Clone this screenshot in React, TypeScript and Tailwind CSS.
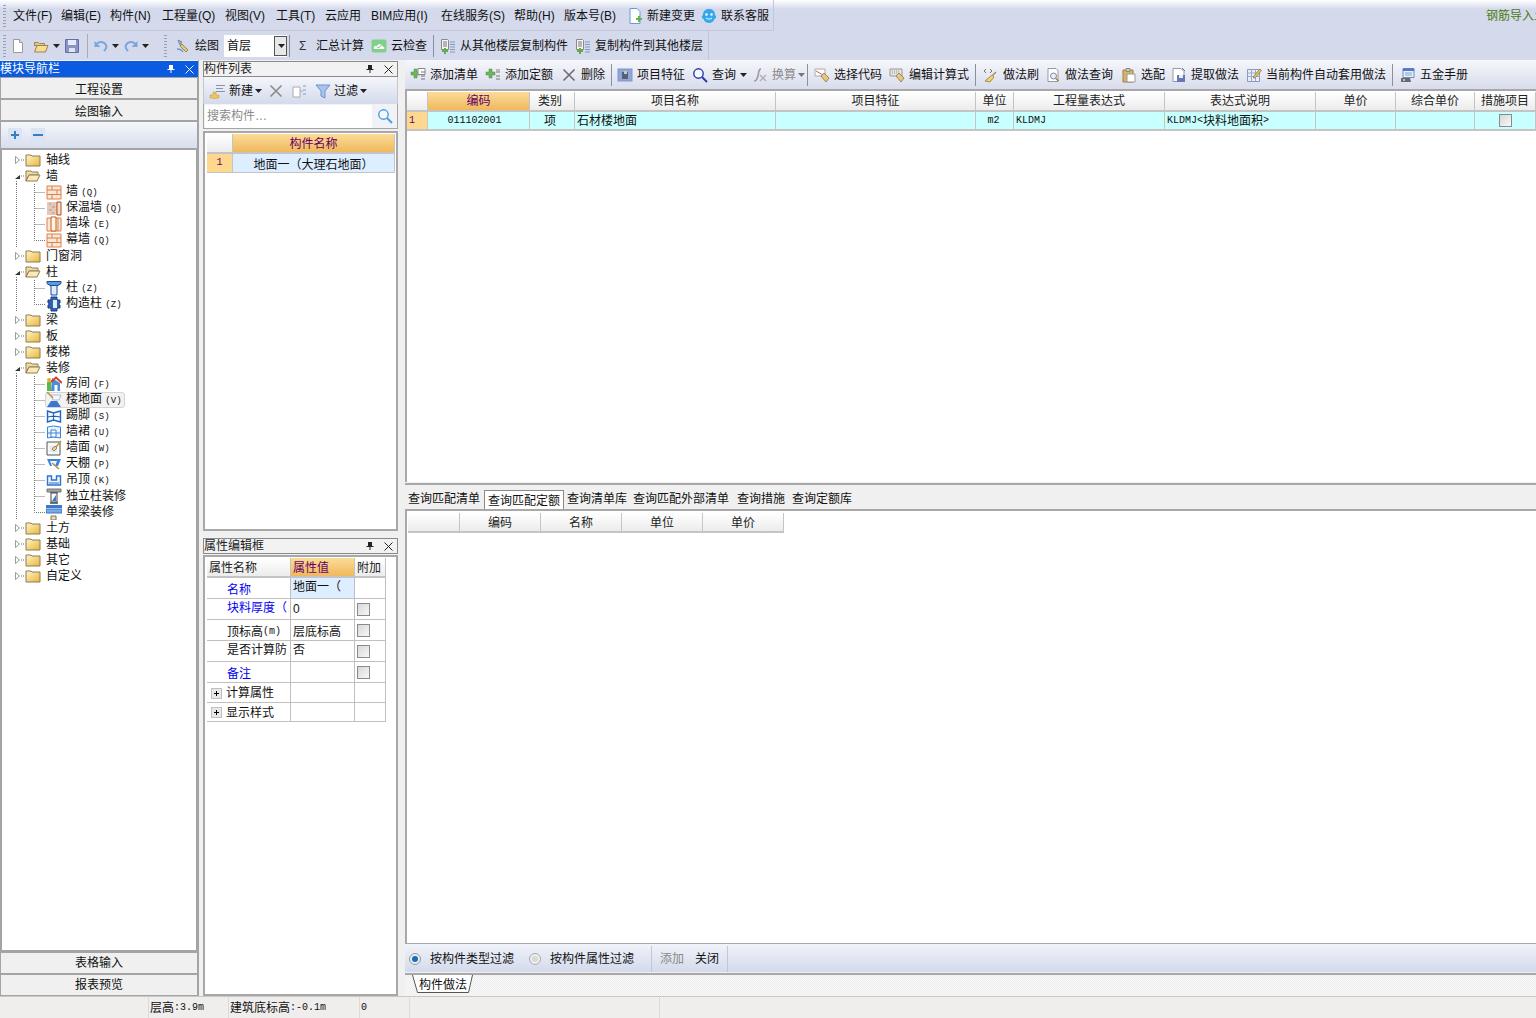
import type { ReactNode } from 'react';

// half width latin, like the bitmap font of the app
const M = ({ children }: { children: ReactNode }) => (
  <span className="font-['Liberation_Mono',monospace] text-[10px]">{children}</span>
);
const T = ({ children }: { children: ReactNode }) => (
  <span className="font-['Liberation_Mono',monospace] text-[9px]">{children}</span>
);

const Ico = ({ children, className = '' }: { children: ReactNode; className?: string }) => (
  <svg viewBox="0 0 16 16" className={`h-4 w-4 shrink-0 ${className}`}>{children}</svg>
);

const NewPage = () => <Ico><path d="M3.5 1.5h6l3 3v10h-9z" fill="#fff" stroke="#9a9a9a" /><path d="M9.5 1.5v3h3" fill="#e8e8e8" stroke="#9a9a9a" /></Ico>;
const OpenFolder = () => <Ico><path d="M1.5 4.5h4l1 1h5v2h-10z" fill="#e8c97a" stroke="#9a8450" /><path d="M1.5 14l2.5-6.5h11l-2.5 6.5z" fill="#f6dc94" stroke="#9a8450" /></Ico>;
const Save = () => <Ico><path d="M1.5 1.5h13v13h-13z" fill="#8a94c8" stroke="#6670a8" /><path d="M4 2h8v5H4z" fill="#e8ecf8" /><path d="M5 10h6v4H5z" fill="#dfe3f2" /></Ico>;
const Undo = ({ flip = false }: { flip?: boolean }) => (
  <Ico className={flip ? '-scale-x-100' : ''}>
    <path d="M3 7c2-4 8-4 10 0 1 2 0 4-2 6" fill="none" stroke="#7aa6dc" strokeWidth="2" />
    <path d="M1.5 3v6h6z" fill="#7aa6dc" />
  </Ico>
);
const Caret = ({ dim = false }: { dim?: boolean }) => (
  <svg viewBox="0 0 7 4" className="ml-[2px] h-1 w-[7px] shrink-0"><path d="M0 0h7L3.5 4z" fill={dim ? '#777' : '#222'} /></svg>
);
const Brush = () => <Ico><path d="M3 2l4 2-2 3z" fill="#a8b4d8" stroke="#7a86a8" /><path d="M7 6l6 6-2 2-6-6z" fill="#e2c478" stroke="#a08a50" /><path d="M2 11c3 0 5 1 6 3" fill="none" stroke="#6f9ad8" strokeWidth="1.5" /></Ico>;
const CloudOk = () => <Ico><rect x="0.5" y="1.5" width="15" height="13" rx="2" fill="#7fd08a" /><path d="M3 11c-1-3 2-4 3-3 1-3 6-2 6 1 2 0 2 2 0 2z" fill="#fff" /><path d="M6 8.5l1.5 1.5L10.5 7" fill="none" stroke="#66bb72" /></Ico>;
const CopyList = () => <Ico><path d="M1.5 1.5h6l1 1v9h-7z" fill="#f4f4f4" stroke="#888" /><path d="M3 4h4M3 6h4M3 8h4" stroke="#777" /><path d="M10 4h5M10 6.5h5M10 9h5M10 11.5h5M10 14h5" stroke="#7b9ac0" /><path d="M2 12h2v-2h2v2h2v2H6v2H4v-2H2z" fill="#5fae4c" /></Ico>;
const AddList = ({ grid = true }: { grid?: boolean }) => (
  <Ico>
    <path d="M1 5h3V2h3v3h3v3H7v3H4V8H1z" fill="#6fb35c" stroke="#4f8f44" strokeWidth="0.5" />
    {grid ? <path d="M8 1.5h7v6H8z" fill="#fff" stroke="#888" /> : <path d="M11 3h4" stroke="#888" />}
    <path d="M11 5h4M11 9h4M11 12h4" stroke="#777" />
  </Ico>
);
const Cross = ({ dim = false }: { dim?: boolean }) => <Ico><path d="M2.5 2.5l11 11M13.5 2.5l-11 11" stroke={dim ? '#8b8b8b' : '#6c6c6c'} strokeWidth="1.6" /></Ico>;
const Feature = () => <Ico><rect x="1" y="2" width="14" height="12" fill="#8fa6d6" stroke="#7e96c8" /><path d="M5 5h6v7H5z" fill="#56606e" /><path d="M7 4h3v3H7z" fill="#c4ccd8" /></Ico>;
const Search = ({ c = '#2a3aa8' }: { c?: string }) => <Ico><circle cx="6.5" cy="6.5" r="4.7" fill="#f4f8ff" stroke={c} strokeWidth="1.4" /><path d="M10 10l5 5" stroke={c} strokeWidth="2" /></Ico>;
const Fx = () => <Ico><path d="M9 2c-3 0-2 4-3 7s-1 5-4 5" fill="none" stroke="#9a9a9a" strokeWidth="1.6" /><path d="M8 8l6 6M14 8l-6 6" stroke="#b0b0b0" strokeWidth="1.4" /></Ico>;
const Tag = () => <Ico><path d="M1 2h10v7H1z" fill="#fff" stroke="#aaa" /><path d="M2 4l7 4" stroke="#d06060" /><path d="M7 9l3-3 5 5-3 4z" fill="#e6c682" stroke="#a08850" /></Ico>;
const Keys = () => <Ico><path d="M1 2h12v7H1z" fill="#e4e4e4" stroke="#999" /><path d="M3 4h8M3 6h8" stroke="#999" strokeDasharray="1 1" /><path d="M7 9l3-3 5 5-3 4z" fill="#e6c682" stroke="#a08850" /></Ico>;
const Broom = () => <Ico><path d="M1 4l2-2M1 4l2 2M7 2l2 2-2 2" fill="none" stroke="#777" /><path d="M13 5l-5 5" stroke="#9c8a50" strokeWidth="1.5" /><path d="M9 8l2 2-4 5-5-1z" fill="#ecd27a" stroke="#a8904c" /></Ico>;
const Doc = () => <Ico><path d="M3 1.5h8l2 2v11H3z" fill="#fff" stroke="#999" /><circle cx="8.5" cy="9" r="3" fill="#e8eef8" stroke="#7a8aa8" /><path d="M10.5 11l3 3" stroke="#a88a48" strokeWidth="1.6" /></Ico>;
const Clip = () => <Ico><path d="M2 3h10v12H2z" fill="#d8b468" stroke="#9c8040" /><path d="M5 1.5h4v3H5z" fill="#ccc" stroke="#888" /><path d="M6 7h8v8H6z" fill="#fff" stroke="#999" /></Ico>;
const Extract = () => <Ico><path d="M2 1.5h8l3 3v10H2z" fill="#fff" stroke="#999" /><path d="M6 8h8v7H6z" fill="#6a74b8" /><path d="M8 8h4v3H8z" fill="#e8ecf8" /><path d="M11 1l3 3" stroke="#4a74c0" /></Ico>;
const AutoApply = () => <Ico><path d="M1.5 2.5h12v12h-12z" fill="#e8eef6" stroke="#8a9ab8" /><path d="M1.5 6h12M1.5 9.5h12M5.5 2.5v12M9.5 2.5v12" stroke="#9aaaca" /><path d="M14 2l1.5 1.5-6 7-2 .5.5-2z" fill="#e4c274" stroke="#a08850" /></Ico>;
const Manual = () => <Ico><path d="M3 1.5h11v9H3z" fill="#e8f0fa" stroke="#6a8ac0" /><path d="M3 1.5h11v2.5H3z" fill="#4a7cc8" /><path d="M5 6h7M5 8h7" stroke="#8aa0c4" /><path d="M1 11h9l1 4H1z" fill="#6a6a6a" /><circle cx="4" cy="13" r="1" fill="#ddd" /></Ico>;
const ChangeDoc = () => <Ico><path d="M3 .5h7l3 3v12H3z" fill="#fff" stroke="#6a9ad0" /><path d="M9 10h2V8h2v2h2v2h-2v2h-2v-2H9z" fill="#6ab04c" /></Ico>;
const Service = () => <Ico><path d="M8 1c4 0 6 2.5 6 6 2 1 1 4-.5 4-1 2.5-3 4-5.500 4s-4.500-1.500-5.500-4C1 11 0 8 2 7c0-3.500 2-6 6-6z" fill="#35a8ea" /><circle cx="5.5" cy="6.5" r="1.2" fill="#fff" /><circle cx="10.5" cy="6.5" r="1.2" fill="#fff" /><path d="M5 10c2 1.5 4 1.5 6 0" fill="none" stroke="#fff" /></Ico>;
const NewItem = () => <Ico><path d="M7 2.5h9M7 5.5h7M7 8.5h9" stroke="#8a94a8" /><path d="M1 12h3V9h3v3h3v3H7v1H4v-1H1z" fill="#ecc85c" stroke="#b89838" strokeWidth="0.5" /></Ico>;
const CopyDoc = () => <Ico><path d="M2 4h7v10H2z" fill="#fff" stroke="#aaa" /><path d="M12 3h3M12 7h3M12 11h3" stroke="#7e9cc4" /><path d="M9 8h3" stroke="#aaa" /></Ico>;
const Funnel = () => <Ico><path d="M1 2h14L10 8v7l-4-2V8z" fill="#a8c4ec" stroke="#6c92cc" /></Ico>;

const Pin = () => (
  <svg viewBox="0 0 8 10" className="h-[10px] w-2 shrink-0"><path d="M2 1h4v4h1.5v1h-3v3h-1V6H.5V5H2z" fill="currentColor" /></svg>
);
const Close = () => (
  <svg viewBox="0 0 9 9" className="h-[9px] w-[9px] shrink-0"><path d="M.5.5l8 8M8.5.5l-8 8" stroke="currentColor" /></svg>
);

const Sep = ({ className = 'mr-[5px]' }: { className?: string }) => <div className={`h-[22px] w-px shrink-0 bg-[#8a8f9c] ${className}`} />;

const Grip = ({ className = '' }: { className?: string }) => (
  <div className={`h-[22px] w-[3px] shrink-0 bg-[repeating-linear-gradient(#9aa0b4_0_1px,transparent_1px_3px)] ${className}`} />
);

const Tool = ({ icon, label, className = '', dim = false }: { icon?: ReactNode; label: string; className?: string; dim?: boolean }) => (
  <div className={`flex shrink-0 items-center gap-[4px] ${dim ? 'text-[#8a8a8a]' : ''} ${className}`}>
    {icon}
    <span>{label}</span>
  </div>
);

const PanelTitle = ({ title, active = false }: { title: string; active?: boolean }) => (
  <div className={`flex h-4 items-center pr-[4px] ${active ? 'bg-[#0a5be0] text-white' : 'border border-[#8a8a8a] bg-[#f2f2f2] text-[#222]'}`}>
    <span className="flex-1 truncate">{title}</span>
    <span className="mr-[10px]"><Pin /></span>
    <Close />
  </div>
);

const NavButton = ({ label, className = '' }: { label: string; className?: string }) => (
  <div className={`flex h-[22px] items-center justify-center border border-[#a4a4a4] bg-[#f0f0f0] text-[#111] ${className}`}>{label}</div>
);

type IconKind = 'brick' | 'warm' | 'pier' | 'column' | 'gcol' | 'room' | 'floor' | 'skirt' | 'dado' | 'wallf' | 'ceil' | 'hang' | 'scol' | 'beam';

const TreeIcon = ({ kind }: { kind: IconKind }) => {
  switch (kind) {
    case 'brick':
      return <Ico><path d="M1 2h14v13H1z" fill="#fbe6d4" stroke="#d8834c" /><path d="M1 6h14M1 10.5h14M6 2v4M11 6v4.500M6 10.500V15" stroke="#d8834c" /></Ico>;
    case 'warm':
      return <Ico><path d="M1 2h10v13H1z" fill="#e4c8bc" /><path d="M11 2h4v13h-4z" fill="#f4e0cc" stroke="#b84c20" /><path d="M3 4h2M6 7h3M3 10h3M6 13h2" stroke="#c88c78" /></Ico>;
    case 'pier':
      return <Ico><path d="M1 2h14v13H1z" fill="#fbe6d4" stroke="#d8834c" /><path d="M5 1h5v14H5z" fill="#fff4e8" stroke="#c85c1c" /><path d="M12 2v13" stroke="#d8834c" /></Ico>;
    case 'column':
      return <Ico><path d="M1 1.5h14v2l-3 2H4l-3-2z" fill="#5a9ae0" stroke="#1c4c98" /><path d="M5 5.5h6V15H5z" fill="#dcecfc" stroke="#1c4c98" /></Ico>;
    case 'gcol':
      return <Ico><path d="M5 1h6v3h3v3h-1v2h1v3h-3v3H5v-3H2V9h1V7H2V4h3z" fill="#2c62b4" stroke="#1c3c80" /><path d="M7 4h4v8H7z" fill="#e4ecf8" /></Ico>;
    case 'room':
      return <Ico><path d="M6 2l8 5v8H5z" fill="#4c8cd8" /><path d="M5 6l5-4.5L16 7" fill="none" stroke="#d83a2c" strokeWidth="2" /><path d="M8.5 9h3v6h-3z" fill="#fff" /><path d="M1 6h4v9H1z" fill="#5cb848" /><circle cx="3" cy="4" r="2" fill="#e8a82c" /></Ico>;
    case 'floor':
      return <Ico><path d="M5 3h10l-2 5H7z" fill="#f4f6fc" stroke="#b4bcd0" /><path d="M5 9h6l4 6H1z" fill="#3878d0" /><path d="M1 0l6 6" stroke="#b89848" strokeWidth="1.6" /></Ico>;
    case 'skirt':
      return <Ico><path d="M1.5 3l6 2 7-2v11l-7-2-6 2z" fill="#f4f8fe" stroke="#1c68c4" strokeWidth="1.4" /><path d="M7.5 5v7M1.5 9l6-1 7 1" stroke="#1c68c4" /></Ico>;
    case 'dado':
      return <Ico><path d="M1.5 3l6-1 7 1v11l-7-1-6 1z" fill="#e8f2fc" stroke="#3c84d4" /><path d="M5 6h5v7H5z" fill="#fff" stroke="#3c84d4" /><path d="M1.5 9h13" stroke="#3c84d4" /></Ico>;
    case 'wallf':
      return <Ico><path d="M1 2h13v13H1z" fill="#f8f8f8" stroke="#555" /><path d="M4 6h7v6H4z" fill="#dce8f8" /><path d="M15 1l-5 6" stroke="#b8984c" strokeWidth="1.4" /><path d="M9 6l2 2-3 3-2-2z" fill="#ecd27a" stroke="#a08850" /></Ico>;
    case 'ceil':
      return <Ico><path d="M1 3h14l-3 7H4z" fill="#3c84d8" /><path d="M4 5h7l-2 5H6z" fill="#f4f6fc" /><path d="M6 7l7 6" stroke="#a89048" strokeWidth="1.5" /></Ico>;
    case 'hang':
      return <Ico><path d="M1.5 4v9h13V4h-4v4h-5V4z" fill="#eaf2fc" stroke="#2c74cc" strokeWidth="1.4" /><path d="M3 11h10" stroke="#2c74cc" /></Ico>;
    case 'scol':
      return <Ico><path d="M1 1h14v3H1z" fill="#a4a4a4" stroke="#777" /><path d="M4 4h8v1H4zM4 14h8v2H4z" fill="#777" /><path d="M5 5h6v9H5z" fill="#fff" stroke="#444" /><path d="M6 13l4-6v6z" fill="#3878d0" /></Ico>;
    case 'beam':
      return <Ico><path d="M0 1h16v3H0z" fill="#3878d0" /><path d="M0 5h16v4H0z" fill="#7aa8e0" stroke="#3878d0" /><path d="M5 12h5v4H5z" fill="#e8dcc0" stroke="#8a7444" /></Ico>;
  }
};

const Folder = ({ open }: { open: boolean }) =>
  open ? (
    <Ico><path d="M1 13V3h5l1 1h6v3H4z" fill="#f0dca8" stroke="#8c7c50" /><path d="M1 13l3-6h11l-3 6z" fill="#fbeab8" stroke="#8c7c50" /></Ico>
  ) : (
    <Ico><path d="M1 4V3h5l1 1h8v10H1z" fill="url(#fold)" stroke="#8c7c50" /></Ico>
  );

type Node = { label: ReactNode; icon?: IconKind; folder?: 'open' | 'closed'; last?: boolean; selected?: boolean };

const tree: Node[] = [
  { label: '轴线', folder: 'closed' },
  { label: '墙', folder: 'open' },
  { label: <>墙 <T>(Q)</T></>, icon: 'brick' },
  { label: <>保温墙 <T>(Q)</T></>, icon: 'warm' },
  { label: <>墙垛 <T>(E)</T></>, icon: 'pier' },
  { label: <>幕墙 <T>(Q)</T></>, icon: 'brick', last: true },
  { label: '门窗洞', folder: 'closed' },
  { label: '柱', folder: 'open' },
  { label: <>柱 <T>(Z)</T></>, icon: 'column' },
  { label: <>构造柱 <T>(Z)</T></>, icon: 'gcol', last: true },
  { label: '梁', folder: 'closed' },
  { label: '板', folder: 'closed' },
  { label: '楼梯', folder: 'closed' },
  { label: '装修', folder: 'open' },
  { label: <>房间 <T>(F)</T></>, icon: 'room' },
  { label: <>楼地面 <T>(V)</T></>, icon: 'floor', selected: true },
  { label: <>踢脚 <T>(S)</T></>, icon: 'skirt' },
  { label: <>墙裙 <T>(U)</T></>, icon: 'dado' },
  { label: <>墙面 <T>(W)</T></>, icon: 'wallf' },
  { label: <>天棚 <T>(P)</T></>, icon: 'ceil' },
  { label: <>吊顶 <T>(K)</T></>, icon: 'hang' },
  { label: '独立柱装修', icon: 'scol' },
  { label: '单梁装修', icon: 'beam', last: true },
  { label: '土方', folder: 'closed' },
  { label: '基础', folder: 'closed' },
  { label: '其它', folder: 'closed' },
  { label: '自定义', folder: 'closed' },
];

const TreeRow = ({ node }: { node: Node }) => {
  const dots = { stroke: '#777', strokeDasharray: '1 1', fill: 'none' };
  if (node.folder) {
    return (
      <div className="flex h-4 items-center pl-[11px]">
        <svg viewBox="0 0 11 16" className="h-4 w-[11px] shrink-0">
          {node.folder === 'open' ? <path d="M1 11l5-4v4z" fill="#333" /> : <path d="M1.5 4.5l4 3.5-4 3.500z" fill="#fff" stroke="#999" />}
          <path d="M7 8h4" {...dots} />
          {node.folder === 'open' && <path d="M2.5 13v3" {...dots} />}
        </svg>
        <Folder open={node.folder === 'open'} />
        <span className="ml-[5px]">{node.label}</span>
      </div>
    );
  }
  return (
    <div className="flex h-4 items-center pl-[13px]">
      <svg viewBox="0 0 29 16" className="h-4 w-[29px] shrink-0">
        <path d="M.5 0v16" {...dots} />
        <path d={node.last ? 'M18.5 0v8.5H29' : 'M18.5 0v16M18.5 8.5H29'} {...dots} />
      </svg>
      <div className={`flex h-4 items-center rounded-[3px] ${node.selected ? 'w-[80px] border border-[#d4d4d4] bg-[#f2f2f2]' : ''}`}>
        <span className={node.selected ? '' : 'ml-px'}><TreeIcon kind={node.icon!} /></span>
        <span className="ml-[4px] whitespace-nowrap">{node.label}</span>
      </div>
    </div>
  );
};

const Head = ({ label, hot = false, className = '' }: { label: string; hot?: boolean; className?: string }) => (
  <div className={`flex h-5 items-center justify-center border-r border-b-2 border-[#c4c4c4] ${hot ? 'bg-gradient-to-b from-[#fbdc98] to-[#efb85c] text-[#660066]' : 'bg-gradient-to-b from-white to-[#ececec] text-[#222]'} ${className}`}>
    {label}
  </div>
);

const Check = () => <div className="h-[13px] w-[13px] border border-[#8a8a8a] bg-gradient-to-br from-[#d8d8d8] to-[#f8f8f8]" />;

const Expand = () => (
  <div className="relative mr-[4px] h-[11px] w-[11px] shrink-0 border border-[#c0c0c0] bg-[#e8e8e8]">
    <div className="absolute left-[2px] top-[4px] h-px w-[5px] bg-black" />
    <div className="absolute left-[4px] top-[2px] h-[5px] w-px bg-black" />
  </div>
);

const propCell = 'flex items-center border-r border-b border-[#c0c0c0] overflow-hidden whitespace-nowrap';

const PropRow = ({ name, value, blue, check = true, h = 'h-[21px]', valueBg = '', expand = false, nudge = '', valueNudge = '' }: { name: ReactNode; value?: string; blue?: boolean; check?: boolean; h?: string; valueBg?: string; expand?: boolean; nudge?: string; valueNudge?: string }) => (
  <div className={`grid grid-cols-[84px_64px_31px] ${h}`}>
    <div className={`${propCell} ${expand ? 'pl-[4px]' : 'pl-[20px]'} ${blue ? 'text-[#0000ee]' : ''} ${nudge}`}>
      {expand && <Expand />}
      {name}
    </div>
    <div className={`${propCell} pl-[2px] ${valueBg} ${valueNudge}`}>{value}</div>
    <div className={`${propCell} pl-[2px]`}>{check && <Check />}</div>
  </div>
);

const mainCols = ['编码', '类别', '项目名称', '项目特征', '单位', '工程量表达式', '表达式说明', '单价', '综合单价', '措施项目'];

const rowCell = 'flex h-[19px] items-center border-r border-b-2 border-[#c4c4c4] bg-[#c8ffff] overflow-hidden whitespace-nowrap';

export default function App() {
  return (
    <div className="flex h-[1018px] w-[1536px] flex-col overflow-hidden bg-[#f0f0f0] text-[12px] leading-4 text-[#111] font-['Liberation_Sans','Noto_Sans_CJK_SC',sans-serif]">
      <svg width="0" height="0" className="absolute">
        <defs>
          <linearGradient id="fold" x1="0" y1="0" x2="1" y2="1">
            <stop offset="0" stopColor="#fff6c8" />
            <stop offset="1" stopColor="#e8b43c" />
          </linearGradient>
        </defs>
      </svg>

      {/* barra de menu e ferramentas */}
      <div className="h-[60px] shrink-0 bg-[linear-gradient(#ffffff,#d4daec_9px)]">
        <div className="flex h-[31px] items-center">
          <div className="flex h-[31px] w-[774px] shrink-0 items-center border-r border-b border-[#c4c8d6] pl-[3px] pt-[1px]">
            <Grip className="mr-[7px]" />
            <span className="w-[48px]">文件(F)</span>
            <span className="w-[49px]">编辑(E)</span>
            <span className="w-[52px]">构件(N)</span>
            <span className="w-[63px]">工程量(Q)</span>
            <span className="w-[51px]">视图(V)</span>
            <span className="w-[49px]">工具(T)</span>
            <span className="w-[46px]">云应用</span>
            <span className="w-[70px]">BIM应用(I)</span>
            <span className="w-[73px]">在线服务(S)</span>
            <span className="w-[50px]">帮助(H)</span>
            <span className="w-[63px]">版本号(B)</span>
            <Tool icon={<ChangeDoc />} label="新建变更" className="w-[74px] gap-[2px]" />
            <Tool icon={<Service />} label="联系客服" className="gap-[3px]" />
          </div>
          <span className="ml-[712px] whitespace-nowrap text-[#4c7a12]">钢筋导入土</span>
        </div>
        <div className="flex h-[29px] w-[709px] items-center border-r border-[#c4c8d6] pl-[3px]">
          <Grip className="mr-[4px]" />
          <NewPage />
          <span className="ml-[7px]"><OpenFolder /></span>
          <span className="ml-[2px]"><Caret /></span>
          <span className="ml-[4px]"><Save /></span>
          <div className="ml-[7px] mr-[5px] h-[24px] w-px bg-[#a8acb8]" />
          <Undo />
          <span className="ml-px"><Caret /></span>
          <span className="ml-[4px]"><Undo flip /></span>
          <span className="ml-px"><Caret /></span>
          <Grip className="ml-[15px] mr-[8px]" />
          <Tool icon={<Brush />} label="绘图" className="w-[49px]" />
          <div className="flex h-[22px] w-[63px] items-center justify-between bg-white pl-[3px]">
            <span>首层</span>
            <div className="flex h-[20px] w-[13px] items-center justify-center border border-[#555] bg-[#e8e8e8]"><Caret /></div>
          </div>
          <Sep className="ml-[2px] mr-[9px]" />
          <span className="w-[17px] text-[#333]">Σ</span>
          <span className="w-[55px]">汇总计算</span>
          <Tool icon={<CloudOk />} label="云检查" className="w-[62px]" />
          <Sep className="mr-[6px]" />
          <Tool icon={<CopyList />} label="从其他楼层复制构件" className="w-[135px]" />
          <Tool icon={<CopyList />} label="复制构件到其他楼层" />
        </div>
      </div>

      <div className="flex min-h-0 flex-1">
        {/* navegação */}
        <div className="flex w-[199px] shrink-0 flex-col border-r border-[#a4a4a4] pt-[1px]">
          <PanelTitle title="模块导航栏" active />
          <NavButton label="工程设置" className="pt-[3px]" />
          <NavButton label="绘图输入" className="pt-[3px]" />
          <div className="flex h-[27px] items-center gap-[9px] border-x border-t border-[#a4a4a4] bg-[linear-gradient(#f4f6fb,#d8deee)] pl-[7px]">
            <svg viewBox="0 0 14 14" className="h-[14px] w-[14px]"><rect width="14" height="14" fill="#dbe4f4" /><path d="M3 7h8M7 3v8" stroke="#3a7cc0" strokeWidth="2" /></svg>
            <svg viewBox="0 0 14 14" className="h-[14px] w-[14px]"><rect width="14" height="14" fill="#dbe4f4" /><path d="M2 7h10" stroke="#3a7cc0" strokeWidth="2" /></svg>
          </div>
          <div className="min-h-0 flex-1 border-2 border-[#a4a4a4] bg-white pt-[2px] pl-px">
            {tree.map((n, i) => <TreeRow key={i} node={n} />)}
          </div>
          <NavButton label="表格输入" />
          <NavButton label="报表预览" />
        </div>

        {/* lista de componentes + propriedades */}
        <div className="ml-[4px] flex w-[195px] shrink-0 flex-col pt-[1px]">
          <PanelTitle title="构件列表" />
          <div className="flex h-[27px] shrink-0 items-center border-x border-[#c8c8c8] bg-[linear-gradient(#f4f6fb,#d4daec)] pl-[5px]">
            <Tool icon={<NewItem />} label="新建" />
            <Caret />
            <span className="ml-[6px]"><Cross dim /></span>
            <span className="ml-[7px]"><CopyDoc /></span>
            <span className="ml-[8px]"><Funnel /></span>
            <span className="ml-[3px]">过滤</span>
            <Caret />
          </div>
          <div className="flex h-[25px] shrink-0 items-center border-x border-b border-[#a4a4a4] bg-[#f0f2f8]">
            <div className="ml-px flex h-[23px] w-[167px] items-center rounded-[2px] bg-white pl-[2px] text-[#8a8a8a]">搜索构件…</div>
            <span className="ml-[5px]"><Search c="#4aa0e0" /></span>
          </div>
          <div className="mt-[2px] min-h-0 flex-1 border-2 border-[#a8a8a8] bg-white pl-[2px] pt-[1px]">
            <div className="grid grid-cols-[26px_162px]">
              <Head label="" />
              <Head label="构件名称" hot className="pt-[2px]" />
              <div className="flex h-[19px] items-center justify-center border-r border-b border-[#c4c4c4] bg-[#ffd890] font-['Liberation_Mono',monospace] text-[10px] text-[#660066]">1</div>
              <div className="flex h-[19px] items-center justify-center border-r border-b border-[#c4c4c4] bg-[#dceeff] pt-[3px]">地面一（大理石地面）</div>
            </div>
          </div>
          <div className="mt-[7px]"><PanelTitle title="属性编辑框" /></div>
          <div className="mt-[1px] h-[441px] shrink-0 border-2 border-[#a8a8a8] bg-white pl-[2px] pt-[1px]">
            <div className="grid grid-cols-[84px_64px_31px]">
              <Head label="属性名称" className="justify-start pl-[2px] pt-[2px]" />
              <Head label="属性值" hot className="justify-start pl-[2px] pt-[2px]" />
              <Head label="附加" className="justify-start pl-[2px] pt-[2px]" />
            </div>
            <PropRow name="名称" value="地面一（" blue check={false} valueBg="bg-[#dceeff]" nudge="pt-[3px]" valueNudge="pb-[2px]" />
            <PropRow name="块料厚度（" value="0" blue nudge="pb-[2px]" />
            <PropRow name={<>顶标高<M>(m)</M></>} value="层底标高" nudge="pt-[3px]" valueNudge="pt-[3px]" />
            <PropRow name="是否计算防" value="否" nudge="pb-[2px]" valueNudge="pb-[2px]" />
            <PropRow name="备注" blue nudge="pt-[3px]" />
            <PropRow name="计算属性" expand check={false} h="h-[20px]" nudge="pt-[1px]" />
            <PropRow name="显示样式" expand check={false} h="h-[19px]" nudge="pt-[1px]" />
          </div>
        </div>

        {/* área principal */}
        <div className="ml-[7px] flex min-w-0 flex-1 flex-col">
          <div className="flex h-[29px] shrink-0 items-center whitespace-nowrap bg-[linear-gradient(#f6f7fb,#d8dcec)] pl-[5px]">
            <Tool icon={<AddList />} label="添加清单" className="w-[75px]" />
            <Tool icon={<AddList grid={false} />} label="添加定额" className="w-[76px]" />
            <Tool icon={<Cross />} label="删除" className="w-[50px]" />
            <Sep />
            <Tool icon={<Feature />} label="项目特征" className="w-[75px]" />
            <Tool icon={<Search />} label="查询" className="w-[46px]" />
            <Caret />
            <Tool icon={<Fx />} label="换算" dim className="ml-[5px] w-[44px] gap-[2px]" />
            <Caret dim />
            <Sep className="ml-[2px] mr-[6px]" />
            <Tool icon={<Tag />} label="选择代码" className="w-[75px]" />
            <Tool icon={<Keys />} label="编辑计算式" className="w-[86px]" />
            <Sep className="mr-[7px]" />
            <Tool icon={<Broom />} label="做法刷" className="w-[62px] gap-[3px]" />
            <Tool icon={<Doc />} label="做法查询" className="w-[76px]" />
            <Tool icon={<Clip />} label="选配" className="w-[50px] gap-[3px]" />
            <Tool icon={<Extract />} label="提取做法" className="w-[75px]" />
            <Tool icon={<AutoApply />} label="当前构件自动套用做法" className="w-[146px]" />
            <Sep className="mr-[7px]" />
            <Tool icon={<Manual />} label="五金手册" className="gap-[3px]" />
          </div>

          <div className="h-[393px] shrink-0 border-t-2 border-l-2 border-[#a8a8a8] bg-white pt-[1px]">
            <div className="grid grid-cols-[21px_102px_45px_201px_200px_38px_151px_151px_80px_79px_61px]">
              <Head label="" />
              {mainCols.map((c, i) => <Head key={c} label={c} hot={i === 0} className={c === '类别' ? 'pr-[4px]' : ''} />)}
              <div className={`${rowCell} bg-[#ffd890] pl-[2px] font-['Liberation_Mono',monospace] text-[10px] text-[#660066]`}>1</div>
              <div className={`${rowCell} justify-center bg-[#b4ecff] pr-[8px]`}><M>011102001</M></div>
              <div className={`${rowCell} justify-center pr-[4px]`}>项</div>
              <div className={`${rowCell} pl-[2px]`}>石材楼地面</div>
              <div className={rowCell} />
              <div className={`${rowCell} justify-center pr-[2px]`}><M>m2</M></div>
              <div className={`${rowCell} pl-[2px]`}><M>KLDMJ</M></div>
              <div className={`${rowCell} pl-[2px]`}><M>KLDMJ&lt;</M>块料地面积<M>&gt;</M></div>
              <div className={rowCell} />
              <div className={rowCell} />
              <div className={`${rowCell} justify-center`}><Check /></div>
            </div>
          </div>

          <div className="h-[3px] shrink-0 border-b-2 border-[#a8a8a8] bg-[#f0f0f0]" />
          <div className="flex h-[24px] shrink-0 items-center whitespace-nowrap pl-[3px] pt-[3px]">
            <span>查询匹配清单</span>
            <span className="ml-[4px] mr-[3px] mt-[2px] flex h-[20px] items-center border-x border-t border-[#8a8a8a] bg-white px-[3px] pt-[2px]">查询匹配定额</span>
            <span>查询清单库</span>
            <span className="ml-[6px]">查询匹配外部清单</span>
            <span className="ml-[8px]">查询措施</span>
            <span className="ml-[7px]">查询定额库</span>
          </div>

          <div className="min-h-0 flex-1 border-t-2 border-l-2 border-[#a8a8a8] bg-white pl-px pt-[2px]">
            <div className="grid w-[376px] grid-cols-[52px_81px_81px_81px_81px]">
              <Head label="" />
              <Head label="编码" className="pt-[1px]" />
              <Head label="名称" className="pt-[1px]" />
              <Head label="单位" className="pt-[1px]" />
              <Head label="单价" className="pt-[1px]" />
            </div>
          </div>

          <div className="flex h-[29px] shrink-0 items-center border-t border-[#a8a8a8] bg-[linear-gradient(#f0f3fa,#d4daec)] pl-[4px] pt-[1px]">
            <svg viewBox="0 0 12 12" className="h-3 w-3 shrink-0"><circle cx="6" cy="6" r="5.5" fill="#e8ecf4" stroke="#999" /><circle cx="6" cy="6" r="3" fill="#1c6cb4" /></svg>
            <span className="ml-[9px]">按构件类型过滤</span>
            <svg viewBox="0 0 12 12" className="ml-[15px] h-3 w-3 shrink-0"><circle cx="6" cy="6" r="5.5" fill="#eeeeee" stroke="#aaa" /><circle cx="6" cy="6" r="3" fill="#d8d8d8" /></svg>
            <span className="ml-[9px]">按构件属性过滤</span>
            <div className="ml-[17px] h-[26px] w-px bg-[#c4c8d6]" />
            <span className="ml-[8px] text-[#8a8a8a]">添加</span>
            <span className="ml-[11px]">关闭</span>
            <div className="ml-[8px] h-[26px] w-px bg-[#c4c8d6]" />
          </div>

          <div className="mt-[1px] flex h-[23px] shrink-0 items-start border-t-2 border-[#a8a8a8] bg-[repeating-conic-gradient(#fafafa_0_25%,#ececec_0_50%)] bg-[length:2px_2px] pl-[7px]">
            <svg viewBox="0 0 7 18" className="h-[18px] w-[7px] shrink-0"><path d="M7 18V0H0l5 17.500z" fill="#fff" /><path d="M.5 0l5 17.500H7" fill="none" stroke="#555" /></svg>
            <span className="flex h-[18px] items-center border-b border-[#555] bg-white pt-[2px]">构件做法</span>
            <svg viewBox="0 0 6 18" className="h-[18px] w-[6px] shrink-0"><path d="M0 18V0h6L2 17.500z" fill="#fff" /><path d="M5.500 0L1.500 17.500H0" fill="none" stroke="#555" /></svg>
          </div>
        </div>
      </div>

      {/* status */}
      <div className="flex h-[22px] shrink-0 items-center border-t border-[#c8c8c8] bg-[#f0eded]">
        <div className="h-full w-[149px] border-r border-[#dedada]" />
        <div className="flex h-full w-[80px] items-center border-r border-[#dedada] pl-px whitespace-nowrap">层高<M>:3.9m</M></div>
        <div className="flex h-full w-[131px] items-center border-r border-[#dedada] pl-px whitespace-nowrap">建筑底标高<M>:-0.1m</M></div>
        <div className="flex h-full w-[50px] items-center border-r border-[#dedada] pl-px"><M>0</M></div>
        <div className="h-full w-[250px] border-r border-[#dedada]" />
      </div>
    </div>
  );
}
